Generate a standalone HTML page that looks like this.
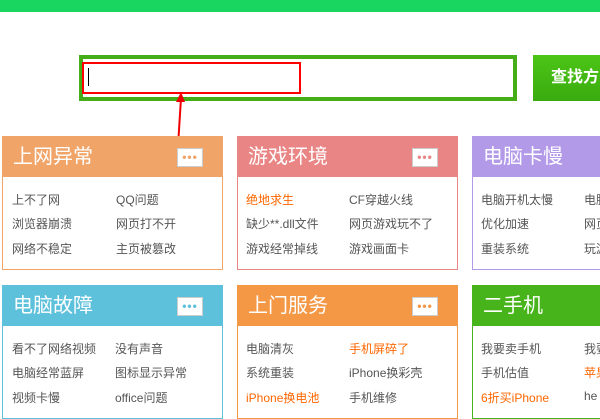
<!DOCTYPE html><html><head><meta charset="utf-8"><style>
*{margin:0;padding:0;box-sizing:border-box}
body{width:600px;height:400px;overflow:hidden;background:#fff;font-family:"Liberation Sans","Noto Sans CJK SC",sans-serif;position:relative}
.top{position:absolute;left:0;top:0;width:600px;height:12px;background:#18d660}
.sb{position:absolute;left:79px;top:55px;width:438px;height:46px;border:4px solid #45ad18;background:#fff}
.red{position:absolute;left:82px;top:62px;width:219px;height:32px;border:2px solid #f00}
.cur{position:absolute;left:88px;top:68px;width:1px;height:18px;background:#000}
.btn{position:absolute;left:533px;top:55px;width:80px;height:46px;background:linear-gradient(#4cc516,#3aab0f);color:#fff;font-size:16px;font-weight:bold;line-height:46px;padding-left:18px}
.card{position:absolute;width:221px;height:134px;border:1px solid;background:#fff}
.card .h{height:40px;color:#fff;font-size:20px;line-height:40px;padding-left:10px;position:relative}
.dots{position:absolute;left:174px;top:11px;width:26px;height:19px;background:#fff;border:1px solid rgba(0,0,0,.2);font-size:12px;line-height:16px;text-align:center;letter-spacing:1px;font-weight:bold}
.card .b{position:relative;font-size:12px;color:#555}
.card .b span{position:absolute;white-space:nowrap}
.o{color:#f60}
</style></head><body>
<div class="top"></div>
<div class="sb"></div><div class="red"></div><div class="cur"></div>
<div class="btn">查找方法</div>
<svg style="position:absolute;left:170px;top:90px" width="20" height="60"><line x1="11" y1="8" x2="8" y2="56" stroke="#e00" stroke-width="2"/><polygon points="11,2 6,12 15,12" fill="#e00"/></svg>

<div class="card" style="left:2px;top:136px;border-color:#f0a468"><div class="h" style="background:#f0a468">上网异常<div class="dots" style="color:#f0a468">•••</div></div>
<div class="b"><span style="left:9px;top:14px">上不了网</span><span style="left:113px;top:14px">QQ问题</span><span style="left:9px;top:38px">浏览器崩溃</span><span style="left:113px;top:38px">网页打不开</span><span style="left:9px;top:63px">网络不稳定</span><span style="left:113px;top:63px">主页被篡改</span></div></div>

<div class="card" style="left:237px;top:136px;border-color:#e98585"><div class="h" style="background:#e98585">游戏环境<div class="dots" style="color:#e98585">•••</div></div>
<div class="b"><span class="o" style="left:8px;top:14px">绝地求生</span><span style="left:111px;top:14px">CF穿越火线</span><span style="left:8px;top:38px">缺少**.dll文件</span><span style="left:111px;top:38px">网页游戏玩不了</span><span style="left:8px;top:63px">游戏经常掉线</span><span style="left:111px;top:63px">游戏画面卡</span></div></div>

<div class="card" style="left:472px;top:136px;border-color:#b39ae9"><div class="h" style="background:#b39ae9">电脑卡慢</div>
<div class="b"><span style="left:8px;top:14px">电脑开机太慢</span><span style="left:111px;top:14px">电脑</span><span style="left:8px;top:38px">优化加速</span><span style="left:111px;top:38px">网页</span><span style="left:8px;top:63px">重装系统</span><span style="left:111px;top:63px">玩游</span></div></div>

<div class="card" style="left:2px;top:285px;border-color:#5ec1dc"><div class="h" style="background:#5ec1dc">电脑故障<div class="dots" style="color:#5ec1dc">•••</div></div>
<div class="b"><span style="left:9px;top:14px">看不了网络视频</span><span style="left:112px;top:14px">没有声音</span><span style="left:9px;top:38px">电脑经常蓝屏</span><span style="left:112px;top:38px">图标显示异常</span><span style="left:9px;top:63px">视频卡慢</span><span style="left:112px;top:63px">office问题</span></div></div>

<div class="card" style="left:237px;top:285px;border-color:#f49846"><div class="h" style="background:#f49846">上门服务<div class="dots" style="color:#f49846">•••</div></div>
<div class="b"><span style="left:8px;top:14px">电脑清灰</span><span class="o" style="left:111px;top:14px">手机屏碎了</span><span style="left:8px;top:38px">系统重装</span><span style="left:111px;top:38px">iPhone换彩壳</span><span class="o" style="left:8px;top:63px">iPhone换电池</span><span style="left:111px;top:63px">手机维修</span></div></div>

<div class="card" style="left:472px;top:285px;border-color:#46b41a"><div class="h" style="background:#46b41a">二手机</div>
<div class="b"><span style="left:8px;top:14px">我要卖手机</span><span style="left:111px;top:14px">我要</span><span style="left:8px;top:38px">手机估值</span><span class="o" style="left:111px;top:38px">苹果</span><span class="o" style="left:8px;top:63px">6折买iPhone</span><span style="left:111px;top:63px">he</span></div></div>
</body></html>
